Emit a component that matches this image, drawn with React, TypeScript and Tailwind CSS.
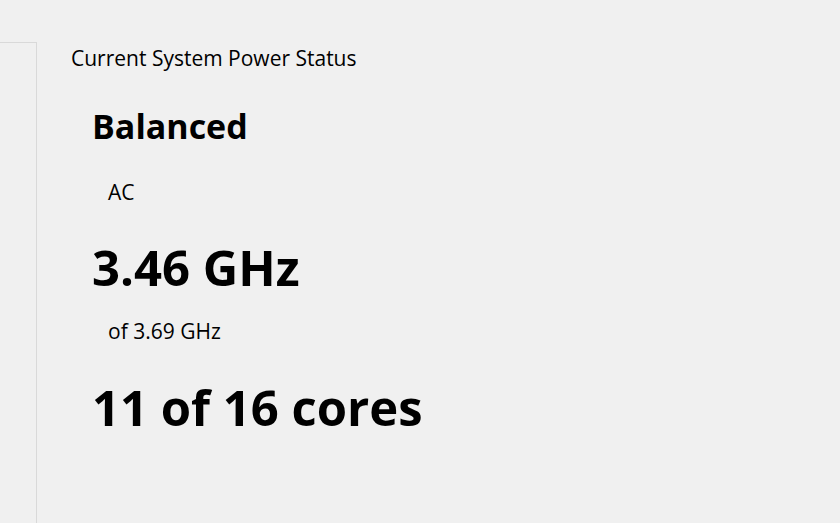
export default function App() {
  return (
    <div className="flex h-[523px] w-[840px] overflow-hidden bg-[#f0f0f0] text-black" style={{ fontFamily: '"Open Sans", "Noto Sans", sans-serif' }}>
      <div className="mt-[42px] w-[37px] shrink-0 border-r border-t border-[#d9d9d9]" />
      <div className="flex flex-col pl-[34px] pt-[44px]">
        <div className="text-[21px] leading-[28px]">Current System Power Status</div>
        <div className="ml-[21px] mt-[34px] text-[34px] font-bold leading-[40px]">Balanced</div>
        <div className="ml-[37px] mt-[32px] text-[21px] leading-[28px]">AC</div>
        <div className="ml-[21px] mt-[33px] text-[49px] font-bold leading-[56px]">3.46 GHz</div>
        <div className="ml-[37px] mt-[22px] text-[21px] leading-[28px]">of 3.69 GHz</div>
        <div className="ml-[21px] mt-[34px] text-[49px] font-bold leading-[56px]">11 of 16 cores</div>
      </div>
    </div>
  );
}
